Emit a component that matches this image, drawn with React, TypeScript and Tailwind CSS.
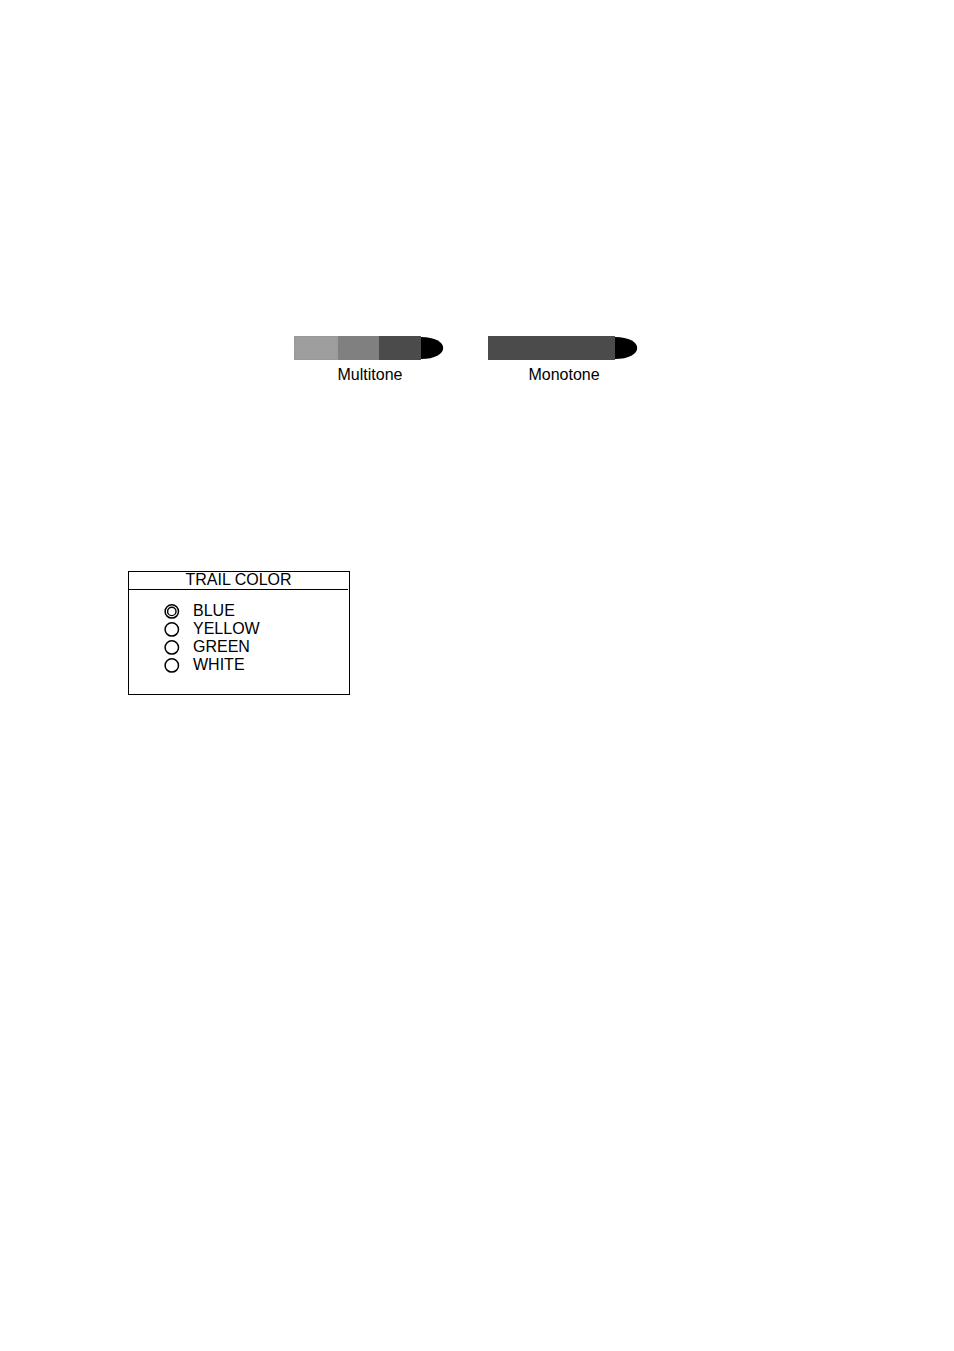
import { useState } from 'react'

const colors = ['BLUE', 'YELLOW', 'GREEN', 'WHITE']

function Trail({ label, children }: { label: string; children: React.ReactNode }) {
  return (
    <figure className="flex flex-col items-center">
      <div className="flex h-6 items-center">
        {children}
        <svg width="23" height="22" viewBox="0 0 23 22" aria-hidden="true">
          <path d="M0 0C14 0 22.2 5 22.2 11S14 22 0 22Z" fill="#000" />
        </svg>
      </div>
      <figcaption className="pt-[5px] pl-0.5 text-base leading-5">{label}</figcaption>
    </figure>
  )
}

export default function App() {
  const [selected, setSelected] = useState('BLUE')

  return (
    <main className="min-h-screen bg-white pt-84 pb-8 font-['Liberation_Sans',Arial,sans-serif] text-black">
      {/* Trail samples */}
      <div className="flex gap-11 pl-[294px]">
        <Trail label="Multitone">
          <div className="h-6 w-11 border border-[#999999] bg-[#9e9e9e]" />
          <div className="h-6 w-[41px] bg-[#808080]" />
          <div className="h-6 w-[42px] bg-[#4b4b4b]" />
        </Trail>
        <Trail label="Monotone">
          <div className="h-6 w-[127px] bg-[#4b4b4b]" />
        </Trail>
      </div>

      {/* Trail color window */}
      <fieldset
        aria-labelledby="trail-color"
        className="mt-[186px] ml-32 w-[222px] border border-black pb-5"
      >
        <div className="mr-px border-b border-black pb-0.5">
          <h2 id="trail-color" className="text-center text-base leading-[15px]">
            TRAIL COLOR
          </h2>
        </div>
        <div className="flex flex-col pt-3 pl-[35px]">
          {colors.map((color) => (
            <label key={color} className="flex h-[18px] items-center gap-[13px] text-base leading-[18px]">
              <span className="grid size-4 shrink-0">
                <input
                  type="radio"
                  name="trail-color"
                  value={color}
                  checked={selected === color}
                  onChange={() => setSelected(color)}
                  className="col-start-1 row-start-1 size-4 appearance-none rounded-full"
                />
                <svg
                  viewBox="0 0 16 16"
                  className="pointer-events-none col-start-1 row-start-1 size-4"
                  fill="none"
                  stroke="#000"
                  aria-hidden="true"
                >
                  <circle cx="7.8" cy="8.4" r="6.7" strokeWidth="1.5" />
                  {selected === color && <circle cx="7.8" cy="8.4" r="4.2" strokeWidth="1.4" />}
                </svg>
              </span>
              {color}
            </label>
          ))}
        </div>
      </fieldset>
    </main>
  )
}
